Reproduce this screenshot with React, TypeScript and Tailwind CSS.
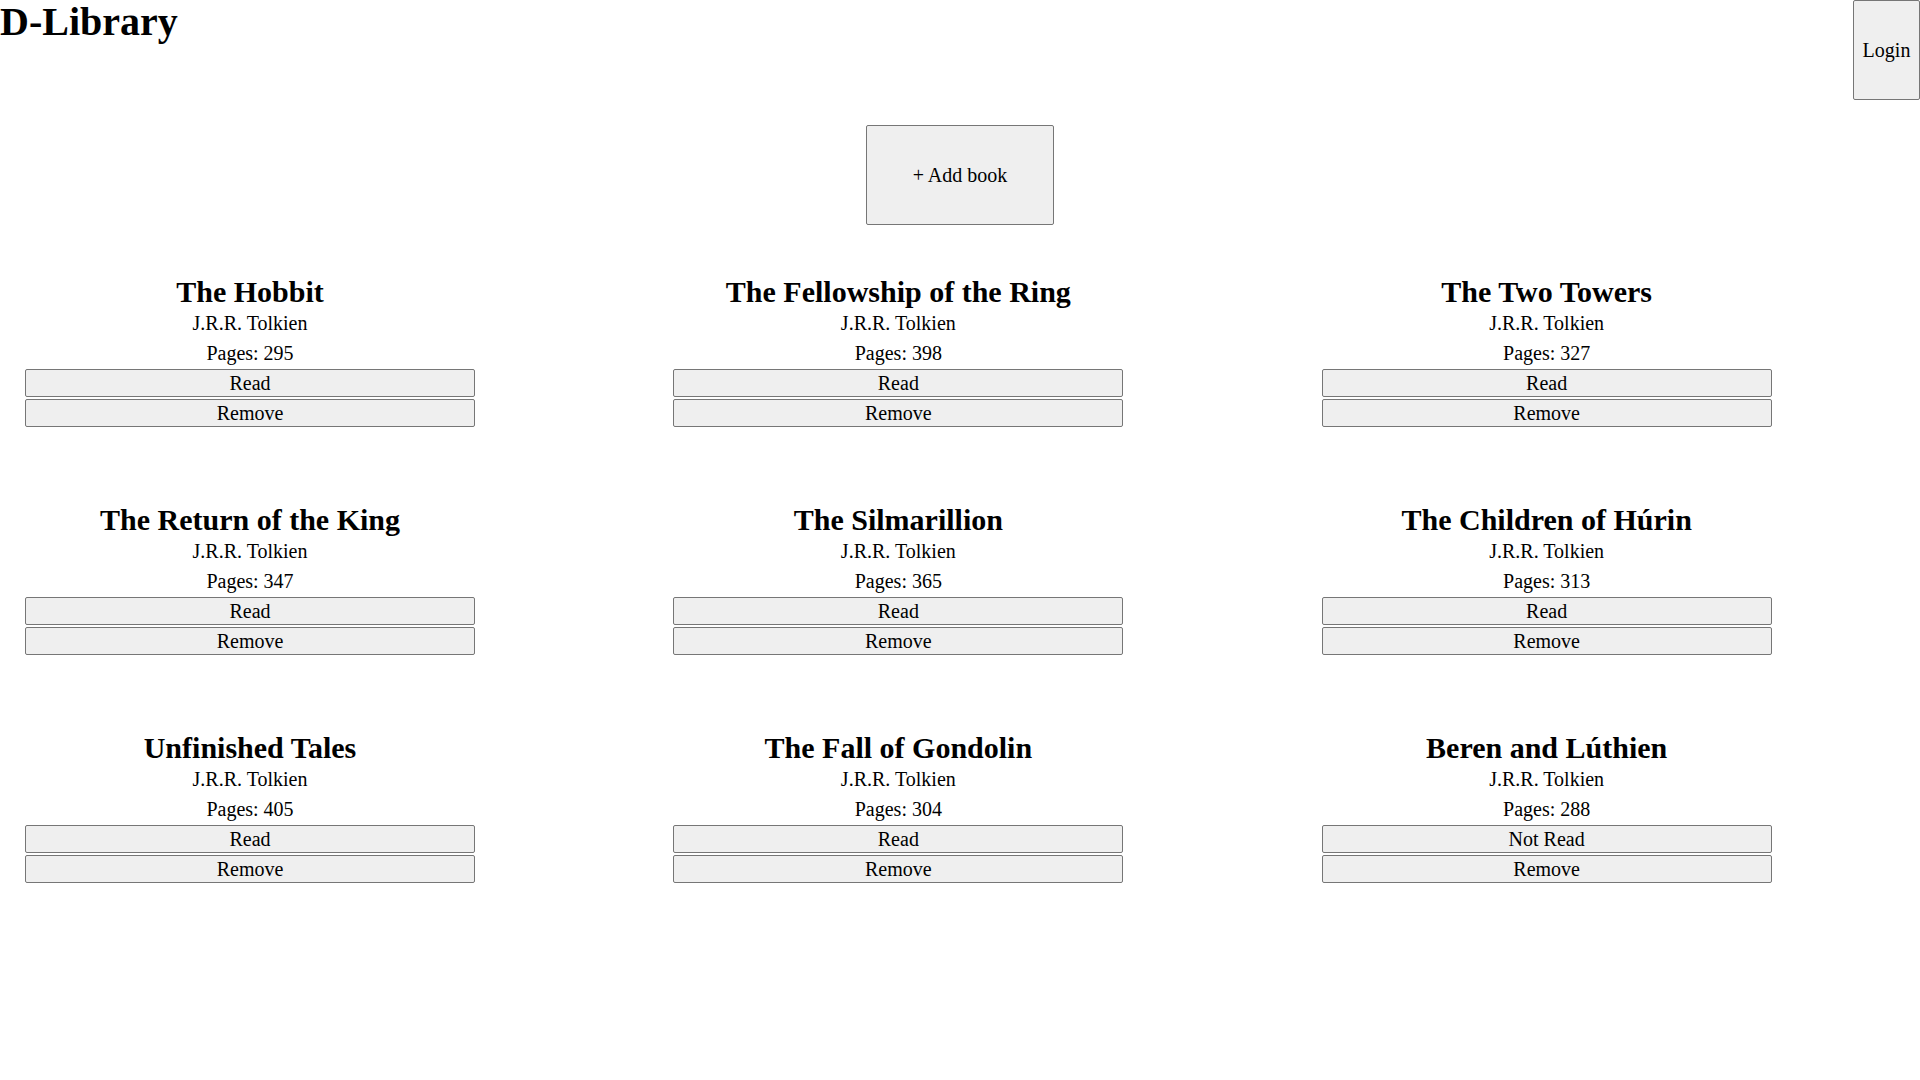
import { useState } from "react";

type Book = { title: string; pages: number; read: boolean };

const initialBooks: Book[] = [
  { title: "The Hobbit", pages: 295, read: true },
  { title: "The Fellowship of the Ring", pages: 398, read: true },
  { title: "The Two Towers", pages: 327, read: true },
  { title: "The Return of the King", pages: 347, read: true },
  { title: "The Silmarillion", pages: 365, read: true },
  { title: "The Children of Húrin", pages: 313, read: true },
  { title: "Unfinished Tales", pages: 405, read: true },
  { title: "The Fall of Gondolin", pages: 304, read: true },
  { title: "Beren and Lúthien", pages: 288, read: false },
];

const button = "rounded-[2px] border border-[#767676] bg-[#efefef] hover:bg-[#e5e5e5]";

export default function App() {
  const [books, setBooks] = useState(initialBooks);

  const toggleRead = (title: string) =>
    setBooks(books.map((b) => (b.title === title ? { ...b, read: !b.read } : b)));
  const remove = (title: string) => setBooks(books.filter((b) => b.title !== title));

  return (
    <div className="min-h-screen bg-white font-['Liberation_Serif',serif] text-[20px] leading-[30px] text-black">
      <header className="flex items-start justify-between">
        <h1 className="text-[40px] leading-[43px] font-bold">D-Library</h1>
        <button type="button" className={`h-[100px] w-[67px] ${button}`}>Login</button>
      </header>
      <main>
        <div className="flex justify-center py-[25px]">
          <button type="button" className={`h-[100px] w-[188px] ${button}`}>+ Add book</button>
        </div>
        <section className="grid grid-cols-3 gap-[75px] p-[25px]">
          {books.map((b) => (
            <article key={b.title} className="flex w-full max-w-[450px] flex-col text-center">
              <h2 className="text-[30px] leading-[33px] font-bold">{b.title}</h2>
              <p>J.R.R. Tolkien</p>
              <p>Pages: {b.pages}</p>
              <button type="button" onClick={() => toggleRead(b.title)} className={`my-px h-7 leading-[26px] ${button}`}>
                {b.read ? "Read" : "Not Read"}
              </button>
              <button type="button" onClick={() => remove(b.title)} className={`my-px h-7 leading-[26px] ${button}`}>
                Remove
              </button>
            </article>
          ))}
        </section>
      </main>
    </div>
  );
}
